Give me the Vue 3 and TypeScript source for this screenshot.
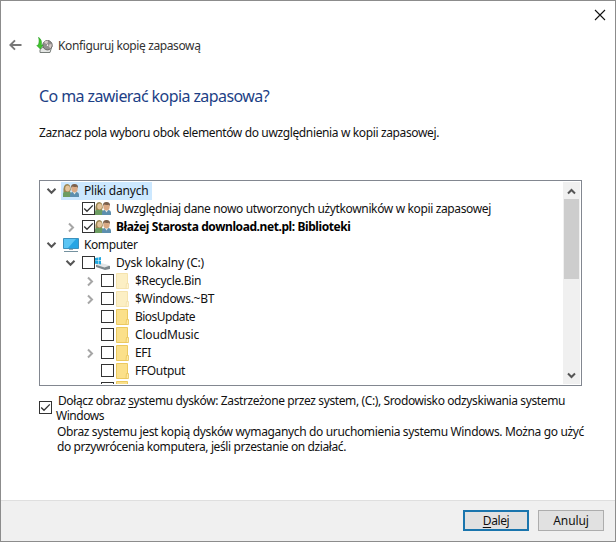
<script setup lang="ts">
interface TreeRow {
  label: string
  width: number
  level: number
  icon: 'users' | 'computer' | 'drive' | 'folder'
  expander?: 'open' | 'closed'
  check?: 'on' | 'off'
  bold?: boolean
  selected?: boolean
  faded?: boolean
}

const rows: TreeRow[] = [
  { label: 'Pliki danych', width: 64.5, level: 0, icon: 'users', expander: 'open', selected: true },
  { label: 'Uwzględniaj dane nowo utworzonych użytkowników w kopii zapasowej', width: 375, level: 1, icon: 'users', check: 'on' },
  { label: 'Błażej Starosta download.net.pl: Biblioteki', width: 234.5, level: 1, icon: 'users', expander: 'closed', check: 'on', bold: true },
  { label: 'Komputer', width: 53.5, level: 0, icon: 'computer', expander: 'open' },
  { label: 'Dysk lokalny (C:)', width: 88, level: 1, icon: 'drive', expander: 'open', check: 'off' },
  { label: '$Recycle.Bin', width: 66, level: 2, icon: 'folder', expander: 'closed', check: 'off', faded: true },
  { label: '$Windows.~BT', width: 79, level: 2, icon: 'folder', expander: 'closed', check: 'off', faded: true },
  { label: 'BiosUpdate', width: 60, level: 2, icon: 'folder', check: 'off' },
  { label: 'CloudMusic', width: 64, level: 2, icon: 'folder', check: 'off' },
  { label: 'EFI', width: 16, level: 2, icon: 'folder', expander: 'closed', check: 'off' },
  { label: 'FFOutput', width: 50, level: 2, icon: 'folder', check: 'off' },
  { label: '', width: 0, level: 2, icon: 'folder', check: 'off' },
]

// Tracks a line of text so that it fills the given width in pixels.
const vFit = {
  mounted(el: HTMLElement, binding: { value: number }) {
    const count = (el.textContent ?? '').length
    if (!count || !binding.value) return
    const natural = el.getBoundingClientRect().width
    el.style.letterSpacing = `${(binding.value - natural) / count}px`
  },
}
</script>

<template>
  <main class="window">
    <div class="titlebar">
      <svg class="close" width="12" height="12" viewBox="0 0 12 12"><path d="M1 1L11 11M11 1L1 11" /></svg>
    </div>
    <header class="header">
      <svg class="back" width="13" height="12" viewBox="0 0 13 12"><path d="M12.5 6H1.5M6 1.3L1.3 6L6 10.7" /></svg>
      <svg class="app-icon" width="17" height="17" viewBox="0 0 17 17">
        <path d="M4 12.5L8 9H16L14 15.5H4Z" fill="#e4e6e4" stroke="#777d79" />
        <circle cx="11.5" cy="8.2" r="4.7" fill="#92908f" stroke="#696766" />
        <path d="M11.5 8L8 5.2A4.5 4.5 0 0 1 12 3.8ZM11.5 8L15.5 7A4.5 4.5 0 0 1 14.5 11.4Z" fill="#d4c9c6" />
        <circle cx="11.5" cy="8.2" r="1.2" fill="#fff" stroke="#5f5757" stroke-width=".6" />
        <path d="M2.5 .3C5.2 2 6 5 5.2 8L7 8L4.3 12L.8 8.5L2.3 8.1C3.4 5.5 3.3 2.5 2.5 .3Z" fill="#42c52c" stroke="#279b22" stroke-width=".6" />
      </svg>
      <span v-fit="142.5" class="line">Konfiguruj kopię zapasową</span>
    </header>
    <section class="content">
      <h1><span v-fit="230" class="line">Co ma zawierać kopia zapasowa?</span></h1>
      <p class="intro"><span v-fit="400" class="line">Zaznacz pola wyboru obok elementów do uwzględnienia w kopii zapasowej.</span></p>

      <div class="tree">
        <div class="rows">
          <div v-for="(row, i) in rows" :key="i" class="row" :class="`level-${row.level}`">
            <span class="expander">
              <svg v-if="row.expander === 'open'" class="open" width="11" height="8" viewBox="0 0 11 8"><path d="M1.5 1.8L5.5 5.8L9.5 1.8" /></svg>
              <svg v-if="row.expander === 'closed'" class="closed" width="8" height="11" viewBox="0 0 8 11"><path d="M2 1.5L6 5.5L2 9.5" /></svg>
            </span>
            <span v-if="row.check" class="checkbox">
              <svg v-if="row.check === 'on'" width="11" height="11" viewBox="0 0 11 11"><path d="M1.2 5.5L4 8.3L9.8 2.4" /></svg>
            </span>
            <span class="item" :class="{ selected: row.selected, bold: row.bold, plain: !row.check }">
              <svg v-if="row.icon === 'users'" class="icon" width="16" height="16" viewBox="0 0 16 16">
                <path d="M0 14V11Q0 8 3 8H5Q8 8 8 11V14Z" fill="#6d9d62" />
                <path d="M.5 9Q0 1 4.3 1Q7.6 1 7.8 7L6.5 9Z" fill="#9a8550" />
                <ellipse cx="4.6" cy="5.5" rx="2.4" ry="3" fill="#e3c39b" />
                <path d="M7 14V12Q7 9 10 9H13Q16 9 16 12V14Z" fill="#5d8fae" />
                <path d="M9.8 9H13.2L11.5 11.5Z" fill="#e9eee9" />
                <ellipse cx="11.5" cy="5.6" rx="3.2" ry="4" fill="#d9a984" />
                <path d="M8 5.2Q7.6 1 11.5 1Q15.4 1 15 5.2L14 3.8Q11 4.3 9 3.6Z" fill="#7a604c" />
              </svg>
              <svg v-else-if="row.icon === 'computer'" class="icon" width="16" height="16" viewBox="0 0 16 16">
                <path d="M.5 1.5H15.5V11.5H.5Z" fill="#26a5e4" stroke="#3c91bd" />
                <path d="M1 2H13L5 11H1Z" fill="#5bc5f4" />
                <path d="M6 12H10V13H6Z" fill="#9aacb5" /><path d="M1 14H15V15H1Z" fill="#74919f" />
              </svg>
              <svg v-else-if="row.icon === 'drive'" class="icon" width="16" height="16" viewBox="0 0 16 16">
                <path d="M1 10L5 8.5L15 11V14L10 15L1 12Z" fill="#7e888d" />
                <path d="M1 9.7L6 8L15 10.6L9.5 12.4Z" fill="#e3e6e7" />
                <path d="M0 3L3 2.5V5.5L0 5.7ZM3.5 2.4L6 2V5.3L3.5 5.5ZM0 6.1L3 6V9L0 8.7ZM3.5 6H6V9.4L3.5 9.1Z" fill="#21a8df" />
              </svg>
              <svg v-else class="icon" :class="{ faded: row.faded }" width="16" height="16" viewBox="0 0 16 16">
                <path d="M2.5 .5H13.5V15.5H2.5Z" fill="#fbe08a" stroke="#ecc95f" />
                <path d="M12.5 10.5H14.5V15.5H12Z" fill="#ffe9a3" stroke="#e8c55c" stroke-width=".8" />
              </svg>
              <span v-fit="row.width" class="line">{{ row.label }}</span>
            </span>
          </div>
        </div>
        <div class="scrollbar">
          <svg width="9" height="7" viewBox="0 0 9 7"><path d="M1 5.5L4.5 2L8 5.5" /></svg>
          <div class="thumb"></div>
          <svg width="9" height="7" viewBox="0 0 9 7"><path d="M1 1.5L4.5 5L8 1.5" /></svg>
        </div>
      </div>

      <div class="option">
        <span class="checkbox">
          <svg width="11" height="11" viewBox="0 0 11 11"><path d="M1.2 5.5L4 8.3L9.8 2.4" /></svg>
        </span>
        <div class="option-text">
          <div class="first"><span v-fit="507" class="line">Dołącz obraz <u>s</u>ystemu dysków: Zastrzeżone przez system, (C:), Srodowisko odzyskiwania systemu</span></div>
          <div><span v-fit="48" class="line">Windows</span></div>
        </div>
      </div>
      <div class="note">
        <div><span v-fit="527" class="line">Obraz systemu jest kopią dysków wymaganych do uruchomienia systemu Windows. Można go użyć</span></div>
        <div><span v-fit="289" class="line">do przywrócenia komputera, jeśli przestanie on działać.</span></div>
      </div>
    </section>
    <footer class="footer">
      <button class="primary"><span v-fit="26.5" class="line"><u>D</u>alej</span></button>
      <button><span v-fit="35.5" class="line">Anuluj</span></button>
    </footer>
  </main>
</template>

<style>
body {
  margin: 0;
}
</style>

<style scoped>
.window {
  box-sizing: border-box;
  display: flex;
  flex-direction: column;
  width: 616px;
  height: 542px;
  border: 1px solid #8c8c8c;
  background: #fff;
  color: #111;
  font: 12px/15px "Noto Sans", "Open Sans", sans-serif;
  overflow: hidden;
}
svg {
  display: block;
  flex: none;
}
.line {
  display: inline-block;
  white-space: pre;
}
.titlebar {
  display: flex;
  justify-content: flex-end;
  height: 27px;
  padding: 8px 9px 0 0;
  box-sizing: border-box;
}
.close path {
  fill: none;
  stroke: #111;
  stroke-width: 1.1;
}
.header {
  display: flex;
  align-items: center;
  height: 34px;
  padding-left: 8px;
  color: #333;
}
.back path {
  fill: none;
  stroke: #777;
  stroke-width: 1.9;
}
.app-icon {
  margin: 0 5px 0 14px;
}
.content {
  flex: 1;
  padding-left: 38px;
}
h1 {
  margin: 22px 0 0;
  color: #1d3f86;
  font-size: 16px;
  font-weight: 400;
  line-height: 24px;
}
.intro {
  margin: 17px 0 0;
}
.tree {
  display: flex;
  box-sizing: border-box;
  width: 543px;
  height: 206px;
  margin-top: 40px;
  padding: 1px;
  border: 1px solid #828790;
}
.rows {
  flex: 1;
  height: 202px;
  padding-left: 1px;
  overflow: hidden;
}
.row {
  display: flex;
  align-items: center;
  height: 18px;
}
.row .line {
  margin-top: -1px;
}
.level-1 {
  padding-left: 19px;
}
.level-2 {
  padding-left: 38px;
}
.expander {
  display: flex;
  flex: none;
  justify-content: center;
  width: 19px;
}
.expander path {
  fill: none;
  stroke-width: 2;
}
.open path {
  stroke: #555;
}
.closed path {
  stroke: #a6a6a6;
}
.checkbox {
  box-sizing: border-box;
  flex: none;
  width: 13px;
  height: 13px;
  border: 1px solid #333;
  background: #fff;
}
.row .checkbox {
  margin: -1px 0 0 2px;
}
.checkbox path {
  fill: none;
  stroke: #333;
  stroke-width: 1.3;
}
.item {
  display: flex;
  align-items: center;
  height: 18px;
}
.plain {
  padding: 0 3px 0 2px;
}
.selected {
  background: #cce8ff;
}
.bold {
  color: #000;
  font-weight: 700;
}
.icon {
  margin-right: 5px;
}
.faded {
  opacity: 0.5;
}
.scrollbar {
  display: flex;
  flex-direction: column;
  align-items: center;
  width: 17px;
  padding: 6px 0 5px;
  box-sizing: border-box;
  background: #f0f0f0;
}
.scrollbar path {
  fill: none;
  stroke: #555;
  stroke-width: 2;
}
.thumb {
  width: 15px;
  height: 80px;
  margin: 4px 0 auto;
  background: #cdcdcd;
}
.option {
  display: flex;
  align-items: center;
  margin-top: 7px;
}
.option .checkbox {
  margin-top: -1px;
}
.option-text {
  margin-left: 4px;
}
.first {
  padding-left: 2px;
}
u {
  text-underline-offset: 2px;
}
.note {
  margin: 1px 0 0 18px;
}
.footer {
  display: flex;
  box-sizing: border-box;
  gap: 9px;
  justify-content: flex-end;
  height: 41px;
  padding: 9px 11px 0 0;
  border-top: 1px solid #dfdfdf;
  background: #f0f0f0;
}
button {
  display: flex;
  align-items: center;
  justify-content: center;
  width: 66px;
  height: 21px;
  padding: 0;
  border: 1px solid #adadad;
  background: #e1e1e1;
  color: #111;
  font: inherit;
}
.primary {
  border: 2px solid #1a75ad;
}
</style>
